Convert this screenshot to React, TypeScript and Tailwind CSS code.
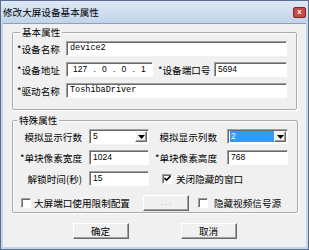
import type { ReactNode } from "react";

const cjk = { fontFamily: '"SimSun", "Noto Sans CJK SC", sans-serif' };
const mono = { fontFamily: '"Liberation Mono", "DejaVu Sans Mono", monospace' };
const sans = { fontFamily: '"Liberation Sans", Arial, sans-serif' };

const sunken =
  "border border-t-[#a0a0a0] border-l-[#a0a0a0] border-b-white border-r-white shadow-[inset_1px_1px_0_#696969] bg-white";
const raised =
  "border border-t-white border-l-white border-b-[#696969] border-r-[#696969] shadow-[inset_-1px_-1px_0_#a0a0a0] bg-[#f0f0f0]";

const TextBox = ({ value, className = "", font = sans }: { value: string; className?: string; font?: object }) => (
  <div className={`${sunken} h-[15px] flex items-center pl-[3px] text-[8.5px] text-black ${className}`} style={font}>
    {value}
  </div>
);

const Select = ({ value, selected = false }: { value: string; selected?: boolean }) => (
  <div className={`${sunken} h-[15px] w-full flex items-stretch p-[1px] pl-[2px]`}>
    <div className="flex-1 flex items-center">
      <span
        className={`text-[8.5px] leading-[11px] pl-[1px] ${selected ? "bg-[#3399ff] text-white w-full" : "text-black"}`}
        style={sans}
      >
        {value}
      </span>
    </div>
    <div className={`${raised} w-[12px] flex items-center justify-center`}>
      <svg width="7" height="4" viewBox="0 0 7 4">
        <path d="M0 0h7L3.5 4z" fill="#000" />
      </svg>
    </div>
  </div>
);

const CheckBox = ({ checked = false }: { checked?: boolean }) => (
  <div className={`${sunken} w-[10px] h-[10px] flex items-center justify-center shrink-0`}>
    {checked && (
      <svg width="7" height="7" viewBox="0 0 7 7">
        <path d="M0.5 3l2 2 4-4" stroke="#000" strokeWidth="1.6" fill="none" />
      </svg>
    )}
  </div>
);

const Label = ({ children, className = "" }: { children: ReactNode; className?: string }) => (
  <span className={`text-[9.6px] leading-[12px] text-black whitespace-nowrap ${className}`} style={cjk}>
    {children}
  </span>
);

const Group = ({ title, children, className = "" }: { title: string; children: ReactNode; className?: string }) => (
  <fieldset className={`border border-[#a9a9a9] shadow-[1px_1px_0_#fff,inset_1px_1px_0_#fff] rounded-[2px] ${className}`}>
    <legend className="ml-[3px] px-[2px] text-[9.6px] leading-[12px] h-[12px]">
      <Label>{title}</Label>
    </legend>
    {children}
  </fieldset>
);

const Button = ({ children, className = "" }: { children: ReactNode; className?: string }) => (
  <div className={`${raised} h-[16px] flex items-center justify-center ${className}`}>{children}</div>
);

const App = () => {
  return (
    <div className="w-[309px] h-[250px] bg-[#c3d5ea] border border-[#5a6f8c] flex flex-col overflow-hidden">
      <div className="h-[22px] flex items-center justify-between pl-[2px] pr-[2px] bg-gradient-to-b from-[#dde8f5] to-[#c1d4ea]">
        <Label>修改大屏设备基本属性</Label>
        <div className="w-[13px] h-[11px] bg-[#c94a43] border border-[#7b2a26] rounded-[2px] flex items-center justify-center">
          <span className="text-white text-[8px] leading-none font-bold" style={sans}>
            x
          </span>
        </div>
      </div>
      <div className="flex-1 mx-[2px] mb-[2px] bg-[#f0f0f0] border-t border-[#8aa0bc] px-[9px] pt-[2px] flex flex-col">
        <Group title="基本属性" className="pl-[4px] pr-[9px] pb-[11px]">
          <div className="flex flex-col gap-[6px] pt-[3px]">
            <div className="flex items-center">
              <Label className="w-[49px]">*设备名称</Label>
              <TextBox value="device2" className="flex-1" font={mono} />
            </div>
            <div className="flex items-center">
              <Label className="w-[49px]">*设备地址</Label>
              <div className={`${sunken} h-[15px] w-[87px] flex items-center justify-around px-[3px] text-[8.5px]`} style={sans}>
                <span>127</span>
                <span>.</span>
                <span>0</span>
                <span>.</span>
                <span>0</span>
                <span>.</span>
                <span>1</span>
              </div>
              <Label className="ml-[5px] w-[56px]">*设备端口号</Label>
              <TextBox value="5694" className="flex-1" />
            </div>
            <div className="flex items-center">
              <Label className="w-[49px]">*驱动名称</Label>
              <TextBox value="ToshibaDriver" className="flex-1" font={mono} />
            </div>
          </div>
        </Group>
        <Group title="特殊属性" className="mt-[4px] pl-[1px] pr-[9px] pb-[1px]">
          <div className="flex flex-col gap-[6px] pt-[3px]">
            <div className="flex items-center">
              <Label className="w-[68px] text-right">模拟显示行数</Label>
              <div className="ml-[7px] w-[60px]">
                <Select value="5" />
              </div>
              <Label className="w-[68px] text-right">模拟显示列数</Label>
              <div className="ml-[10px] w-[61px]">
                <Select value="2" selected />
              </div>
            </div>
            <div className="flex items-center">
              <Label className="w-[68px] text-right">*单块像素宽度</Label>
              <TextBox value="1024" className="ml-[7px] w-[60px]" />
              <Label className="w-[68px] text-right">*单块像素高度</Label>
              <TextBox value="768" className="ml-[10px] w-[61px]" />
            </div>
            <div className="flex items-center">
              <Label className="w-[68px] text-right">解锁时间(秒)</Label>
              <TextBox value="15" className="ml-[7px] w-[60px]" />
              <div className="ml-[13px] flex items-center gap-[4px]">
                <CheckBox checked />
                <Label>关闭隐藏的窗口</Label>
              </div>
            </div>
            <div className="mt-[3px] flex items-center">
              <div className="ml-[7px] flex items-center gap-[3px]">
                <CheckBox />
                <Label>大屏端口使用限制配置</Label>
              </div>
              <Button className="ml-[13px] w-[46px] h-[15px]">
                <span className="text-[8px] text-[#a0a0a0] leading-none" style={sans}>
                  . . .
                </span>
              </Button>
              <div className="ml-[9px] flex items-center gap-[6px]">
                <CheckBox />
                <Label>隐藏视频信号源</Label>
              </div>
            </div>
          </div>
        </Group>
        <div className="flex justify-center gap-[52px] mt-[10px]">
          <Button className="w-[56px]">
            <Label>确定</Label>
          </Button>
          <Button className="w-[56px]">
            <Label>取消</Label>
          </Button>
        </div>
      </div>
    </div>
  );
};

export default App;
